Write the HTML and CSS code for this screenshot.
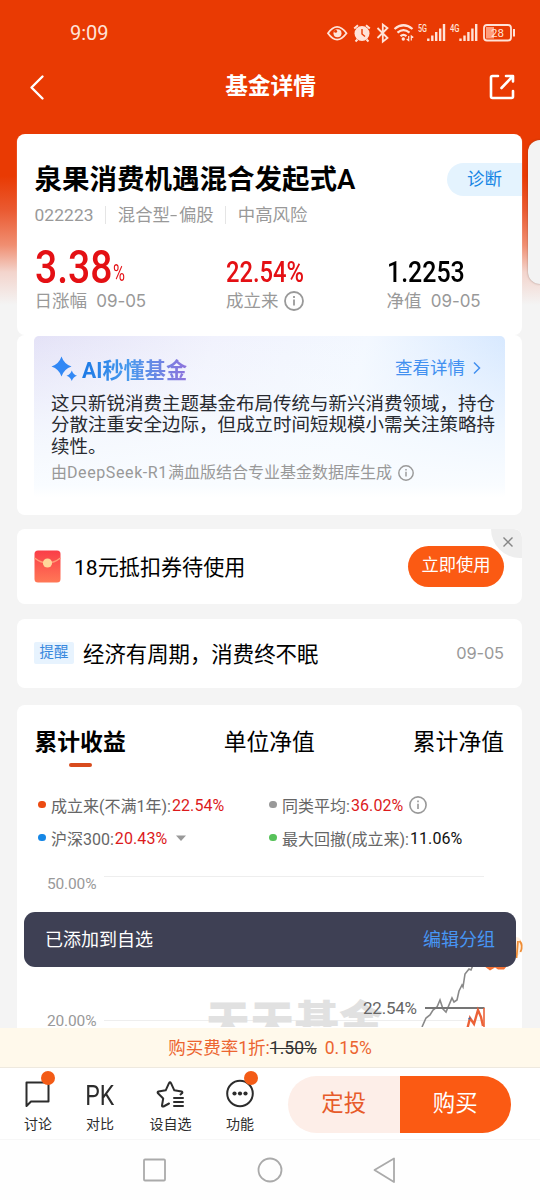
FILE: index.html
```html
<!DOCTYPE html>
<html lang="zh-CN">
<head>
<meta charset="utf-8">
<title>基金详情</title>
<link rel="stylesheet" href="styles.css">
</head>
<body>
<div class="phone">
  <header class="status">
    <span class="clock">9:09</span>
    <svg class="status-icons" width="192" height="26" viewBox="326 20 192 26" fill="none" stroke="#ffe3d8" stroke-width="1.8">
      <path d="M328 33.200Q337 20.500 346.500 33.200Q337 46 328 33.200Z"/>
      <circle cx="337.500" cy="33.200" r="4" fill="#ffe3d8" stroke="none"/><circle cx="335.600" cy="31.300" r="1.500" fill="#e93a03" stroke="none"/>
      <circle cx="362" cy="33.500" r="7.500" fill="#ffe3d8" stroke="none"/>
      <path d="M354.200 28.500l3.800-3.300M369.800 28.500l-3.800-3.300M357.500 39.500l-2 2M366.500 39.500l2 2" stroke-width="2"/>
      <path d="M362 29v5l3 2.500" stroke="#e93a03" stroke-width="1.400"/>
      <path d="M377.500 28l10 10-4.700 3.700V24.500l4.700 3.500-10 10"/>
      <path d="M394.500 29q9-7.500 18 0M397.500 32.700q6-5 12 0M400.500 36.200q3-2.500 6 0" stroke-width="2.200"/>
      <circle cx="403.300" cy="39" r="1.700" fill="#ffe3d8" stroke="none"/>
      <path d="M408.700 36v4.500l-2-1.500M411.300 40.500v-4.500l2 1.500" stroke-width="1.200"/>
      <path d="M428.300 41v-2.500M432.300 41v-5.500M436.200 41v-9M440.200 41v-12.500M444 41v-17" stroke-width="2.400"/>
      <path d="M460.500 41v-2.500M464.500 41v-5.500M468.400 41v-9M472.400 41v-12.500M476.200 41v-17" stroke-width="2.400"/>
      <rect x="484" y="25" width="27" height="15.500" rx="3"/>
      <rect x="486" y="27" width="8" height="11.500" fill="#ff9d7b" stroke="none"/>
      <path d="M514 29v7.500" stroke-width="2"/>
      <g class="status-text" fill="#ffe3d8" stroke="none">
        <text x="418" y="32" font-size="10" textLength="9" lengthAdjust="spacingAndGlyphs">5G</text>
        <text x="450" y="32" font-size="10" textLength="9.500" lengthAdjust="spacingAndGlyphs">4G</text>
        <text class="level" x="491" y="37" font-size="11.500">28</text>
      </g>
    </svg>
  </header>
  <nav class="navbar">
    <svg width="20" height="28" viewBox="0 0 20 28" fill="none" stroke="#fff" stroke-width="2.400" stroke-linecap="round" stroke-linejoin="round"><path d="M14.500 3.500L3.500 14.500 14.500 25.500"/></svg>
    <h1>基金详情</h1>
    <svg width="28" height="28" viewBox="0 0 28 28" fill="none" stroke="#fff" stroke-width="2.600" stroke-linecap="round" stroke-linejoin="round"><path d="M10 3H4.500Q3 3 3 4.500V23.500Q3 25 4.500 25H23.500Q25 25 25 23.500V18M13.500 15L24.500 3.500M18 3H25V8.500"/></svg>
  </nav>

  <main class="feed">
    <section class="card fund">
      <div class="fund-top">
        <h2>泉果消费机遇混合发起式A</h2>
        <span class="diagnose">诊断</span>
      </div>
      <div class="meta"><b>022223</b><i></i><span>混合型<u>-</u>偏股</span><i></i><span>中高风险</span></div>
      <div class="stats">
        <div class="stat"><div class="num big"><span>3.38</span><small>%</small></div><p>日涨幅 <time>09-05</time></p></div>
        <div class="stat"><div class="num"><span>22.54%</span></div><p>成立来<svg class="info" width="20" height="20" viewBox="0 0 20 20"><circle cx="10" cy="10" r="9"/><path d="M10 8.500v6"/><path d="M10 5v2"/></svg></p></div>
        <div class="stat"><div class="num black"><span>1.2253</span></div><p>净值 <time>09-05</time></p></div>
      </div>
    </section>
    <section class="card ai-card">
      <div class="ai">
        <div class="ai-head">
          <svg width="28" height="26" viewBox="0 0 28 26" fill="#3288f5"><path d="M10.500 1.500Q13 9 20.500 11.500 13 14 10.500 21.500 8 14 .5 11.500 8 9 10.500 1.500Z"/><path d="M20.800 15.500Q22 19.500 26 20.700 22 22 20.800 26 19.500 22 15.500 20.700 19.500 19.500 20.800 15.500Z"/></svg>
          <strong>AI秒懂基金</strong>
          <span class="more">查看详情</span>
          <svg width="10" height="14" viewBox="0 0 10 14" fill="none" stroke="#4290f0" stroke-width="1.500"><path d="M2 1.500L7.500 7 2 12.500"/></svg>
        </div>
        <p class="summary">这只新锐消费主题基金布局传统与新兴消费领域，持仓<br>分散注重安全边际，但成立时间短规模小需关注策略持<br>续性。</p>
        <p class="source"><span>由<span class="model">DeepSeek-R1</span>满血版结合专业基金数据库生成</span><svg class="info" width="16" height="16" viewBox="0 0 20 20"><circle cx="10" cy="10" r="9"/><path d="M10 8.500v6"/><path d="M10 5v2"/></svg></p>
      </div>
    </section>

    <section class="card coupon">
      <svg width="27" height="33" viewBox="0 0 27 33"><defs><linearGradient id="env" x2="0" y2="1"><stop stop-color="#fa3d48"/><stop offset="1" stop-color="#ff7856"/></linearGradient></defs><rect x=".5" y=".5" width="26" height="32" rx="3.500" fill="url(#env)"/><path d="M.5 8Q13.500 18 26.500 8" fill="none" stroke="#ff9d78" stroke-width="1.500"/><circle cx="13.500" cy="13" r="4.600" fill="#ffd69a"/></svg>
      <span class="coupon-text">18元抵扣券待使用</span>
      <button class="use">立即使用</button>
      <span class="close"><svg width="12" height="12" viewBox="0 0 12 12" stroke="#858585" stroke-width="1.400"><path d="M1.500 1.500l9 9M10.500 1.500l-9 9"/></svg></span>
    </section>

    <section class="card notice"><span class="tag">提醒</span><span class="notice-text">经济有周期，消费终不眠</span><time>09-05</time></section>

    <section class="card perf">
      <div class="tabs"><b>累计收益</b><span>单位净值</span><span>累计净值</span></div>
      <div class="legend">
        <div class="key orange">成立来(不满1年):<em>22.54%</em></div>
        <div class="key gray">同类平均:<em>36.02%</em><svg class="info" width="18" height="18" viewBox="0 0 20 20"><circle cx="10" cy="10" r="9"/><path d="M10 8.500v6"/><path d="M10 5v2"/></svg></div>
        <div class="key blue">沪深300:<em>20.43%</em><svg class="caret" width="10" height="6" viewBox="0 0 10 6"><path d="M0 .5h10L5 6z" fill="#999"/></svg></div>
        <div class="key green">最大回撤(成立来):<em class="dark">11.06%</em></div>
      </div>
      <svg class="chart" width="523" height="162" viewBox="17 865 523 162" fill="none">
        <path d="M104 876.500H484M104 1020.500H484" stroke="#eee"/>
        <text class="watermark" x="206" y="1038" textLength="177">天天基金</text>
        <text class="axis" x="47" y="888.500" textLength="49.500">50.00%</text>
        <text class="axis" x="47" y="1026" textLength="49.500">20.00%</text>
        <path d="M422 1027l4-9 4-3 3-5 4-3 3-7 3 9 3 3 6-14 2 4 3-2 2-9 3-6 1 2 2-13 4-5 2 1 2-5 6-16" stroke="#898989" stroke-width="1.600"/>
        <path d="M425 1008H484.500" stroke="#757575" stroke-width="2"/>
        <text class="axis current" x="363" y="1014" textLength="54">22.54%</text>
        <path d="M484 1008V1028" stroke="#ec6237" stroke-width="1.600"/>
        <path d="M467.500 1028l2.500-10 4 6 4-14 3 7 2 9" stroke="#ec6237" stroke-width="2.400"/>
        <path d="M468.500 1019l2-1" stroke="#426ca8" stroke-width="1.500"/>
        <path d="M484 966l3-4h15l5 4-3 3.500h-6l-3-2-5 3z" fill="#f47235"/>
        <path d="M514 937q8-1 8 8t-6 12l-4-5z" fill="#fff0df"/><path d="M516.500 958l1.500-17M520.500 952q3-7-1-11" stroke="#ef8d36" stroke-width="1.800"/>
      </svg>
    </section>
  </main>

  <aside class="fee"><span>购买费率1折:</span><s>1.50%</s><span>0.15%</span></aside>

  <footer class="actions">
    <a class="act"><svg width="30" height="30" viewBox="0 0 30 30"><path d="M3.500 4.500H25.500V23.500H8L3.500 28Z"/></svg><label>讨论</label><i class="dot"></i></a>
    <a class="act"><span class="pk">PK</span><label>对比</label></a>
    <a class="act"><svg width="30" height="30" viewBox="0 0 30 30"><path d="M13 25.500L7.500 28.500Q5.800 29 6 27.500L7.200 20.500 2 15.300Q1 14 2.500 13.500L9.700 12.300 13 5.200Q14 3.500 15 5.200L18.300 12.300 25.500 13.500Q27 14 26 15.300L24.500 16.500M18 20H27M18 24H27M18 28H27"/></svg><label>设自选</label></a>
    <a class="act"><svg width="30" height="30" viewBox="0 0 30 30"><circle cx="15" cy="15.500" r="12.800"/><g fill="#2c2c2c" stroke="none"><circle cx="9.500" cy="15.500" r="2.100"/><circle cx="15" cy="15.500" r="2.100"/><circle cx="20.500" cy="15.500" r="2.100"/></g></svg><label>功能</label><i class="dot"></i></a>
    <div class="trade"><button class="plan">定投</button><button class="buy">购买</button></div>
  </footer>

  <div class="sysnav">
    <svg width="256" height="30" viewBox="142 1155 256 30" fill="none" stroke="#aaa" stroke-width="1.800" stroke-linejoin="round"><rect x="144" y="1159.500" width="21" height="21" rx="1"/><circle cx="270" cy="1170" r="11.500"/><path d="M374.500 1170L394 1158.500V1182Z"/></svg>
  </div>

  <div class="side-tab"></div>
  <div class="toast"><span>已添加到自选</span><a>编辑分组</a></div>
</div>
</body>
</html>
```
FILE: styles.css
```css
* { box-sizing: border-box; margin: 0; padding: 0; }
body { background: #f4f4f4; }
.phone {
  position: relative; width: 540px; height: 1200px; overflow: hidden;
  display: flex; flex-direction: column;
  font-family: Roboto, "Noto Sans CJK SC", sans-serif; white-space: nowrap; color: #111;
  background: linear-gradient(#e93a03 0, #e93a03 176px, #ea5a31 210px, #f08e71 245px, #f3d4cc 272px, #f4f4f4 305px);
}
button { border: 0; font-family: inherit; }
i, em { font-style: normal; }
svg { flex: none; }
time { font-family: Inter, Roboto, sans-serif; font-size: 16.4px; letter-spacing: -.1px; }

.status { height: 66px; padding: 20px 22px 0 70px; display: flex; justify-content: space-between; }
.clock { font-size: 20px; line-height: 27px; color: #ffe3d8; }
.status-text { font-family: Roboto, sans-serif; font-weight: 500; }
.level { font-weight: 400; }
.navbar { height: 68px; padding: 0 24px 27px 28px; display: flex; justify-content: space-between; align-items: center; color: #fff; }
.navbar h1 { font-size: 22.7px; line-height: 32px; font-weight: 700; margin-left: 5px; }

.feed { flex: 1; min-height: 0; overflow: hidden; padding: 0 0 0 17px; }
.card { width: 505px; background: #fff; border-radius: 8px; }
.fund { height: 201px; padding: 26px 0 0 17.5px; box-shadow: 0 1px 1px #f5f5f5; }
.fund-top { display: flex; justify-content: space-between; height: 41px; }
.fund h2 { font-size: 27.5px; line-height: 40px; font-weight: 600; color: #000; }
.diagnose { width: 75px; height: 33px; margin-top: 3px; padding-left: 20px; border-radius: 17px 0 0 17px; background: #e4f3fe; color: #1685e4; font-size: 17.5px; line-height: 33px; }
.meta { display: flex; align-items: center; height: 28px; font-size: 17.4px; line-height: 28px; color: #999; }
.meta b { font-weight: 400; letter-spacing: .1px; }
.meta u { display: inline-block; width: 9px; text-decoration: none; transform: scaleX(1.5); transform-origin: left; }
.meta i { width: 1px; height: 18px; background: #e5e5e5; margin: 0 12px 0 11px; }
.stats { display: grid; grid-template-columns: 191.5px 160.5px 130px; padding-top: 17px; }
.num { height: 42px; color: #e41014; font-size: 29.5px; line-height: 52px; font-weight: 500; display: flex; }
.num span { display: inline-block; transform: scaleX(.805); transform-origin: left; }
.num.black { color: #000; }
.num.black span { transform: scaleX(.845); }
.num.big { font-size: 46px; line-height: 43px; }
.num.big span { width: 78px; transform: scaleX(.85); }
.num small { font-size: 24px; line-height: 55px; font-weight: 400; transform: scaleX(.68); transform-origin: left; }
.stat p { display: flex; align-items: center; gap: 5px; font-size: 17.5px; line-height: 26px; color: #999; white-space: pre; }
.stat time { font-size: 17px; }
.info { fill: none; stroke: #999; stroke-width: 1.8; }

.ai-card { height: 180px; padding: 1px 17px; }
.ai { height: 162px; border-radius: 5px; padding: 17px 17px 0; background: linear-gradient(to bottom, rgba(247,251,255,0) 0, rgba(247,251,255,.8) 60%, #f9fcff 92%, #fff), linear-gradient(105deg, #e4e2f7, #f1f2fd 35%, #f3f8ff 65%, #cfe4ff); }
.ai-head { display: flex; align-items: center; height: 30px; }
.ai-head strong { margin-left: 3px; font-size: 21.2px; font-weight: 700; background: linear-gradient(90deg, #1b79e6, #499aed 45%, #8e73dc); -webkit-background-clip: text; background-clip: text; color: transparent; }
.more { margin: -3px 7px 0 auto; font-size: 17.5px; color: #4290f0; }
.ai-head svg:last-child { margin-right: 6px; }
.summary { margin-top: 11px; font-size: 18.5px; line-height: 21.4px; color: #282a30; }
.source { display: flex; align-items: center; gap: 6px; margin-top: 3px; font-size: 16px; line-height: 24px; color: #999; }
.model { letter-spacing: .6px; }

.coupon { position: relative; height: 75px; margin-top: 14px; padding: 0 18px 0 17px; display: flex; align-items: center; overflow: hidden; }
.coupon-text { margin: -2px 0 0 13px; font-size: 21.1px; color: #000; }
.use { width: 96px; height: 41px; margin-left: auto; border-radius: 21px; background: #fb5a13; color: #fff; font-size: 17.3px; line-height: 39px; padding-bottom: 2px; }
.close { position: absolute; top: 0; right: 0; width: 31px; height: 29px; border-radius: 0 8px 0 29px; background: #eee; display: flex; align-items: center; justify-content: center; padding: 0 0 4px 3px; }
.notice { height: 69px; margin-top: 15px; padding: 0 18px 0 17px; display: flex; align-items: center; }
.tag { width: 40px; height: 22px; margin-top: -1px; border-radius: 2px; background: #e7f3fe; color: #3888dd; font-size: 14.4px; line-height: 21px; text-align: center; }
.notice-text { margin: -3px 0 0 9px; font-size: 21.4px; color: #000; }
.notice time { margin: -1px 0 0 auto; color: #999; }

.perf { margin-top: 17px; height: 340px; padding-top: 21px; }
.tabs { display: flex; justify-content: space-between; height: 42px; padding: 0 18px 0 17.5px; font-size: 22.8px; line-height: 33px; color: #000; }
.tabs b { display: flex; flex-direction: column; align-items: center; }
.tabs b::after { content: ""; width: 23px; height: 4px; border-radius: 2px; background: #d84b1d; margin-top: 4px; }
.legend { display: grid; grid-template-columns: 231px 250px; grid-auto-rows: 33px; padding: 20px 0 0 21px; height: 97px; }
.key { display: flex; align-items: center; height: 33px; font-size: 16px; color: #666; }
.key::before { content: ""; width: 7.5px; height: 7.5px; border-radius: 4px; margin-right: 5.5px; background: #999; }
.orange::before { background: #ec4b12; }
.blue::before { background: #1687e6; }
.green::before { background: #57c25a; }
.key em { color: #dc1a1c; margin-left: 1px; padding-top: 2px; letter-spacing: .1px; }
.key em.dark { color: #111; }
.key .info { margin-left: 6px; }
.caret { margin-left: 9px; }
.chart { display: block; }
.axis { font-size: 15.5px; fill: #999; }
.current { font-size: 17px; fill: #666; }
.watermark { font-size: 44px; font-weight: 900; fill: #e1e1e1; }

.fee { height: 40px; display: flex; justify-content: center; align-items: center; background: #fff9eb; border-bottom: 1px solid #eee9df; font-size: 17.5px; color: #ec6530; }
.fee span:first-child { margin-top: -2px; }
.fee s { color: #333; margin-right: 8px; }
.actions { height: 71px; display: flex; background: #fff; padding: 8px 29px 0 3px; }
.act { position: relative; width: 70px; display: flex; flex-direction: column; align-items: center; }
.act:nth-child(2) { width: 54px; }
.act:nth-child(3) { width: 87px; }
.act:nth-child(4) { width: 52px; }
.act svg { fill: none; stroke: #2c2c2c; stroke-width: 2; stroke-linejoin: round; stroke-linecap: round; height: 32px; margin-top: 1px; }
.act label { font-size: 14px; line-height: 21px; margin-top: 5px; color: #2c2c2c; }
.pk { height: 33px; font-size: 28px; line-height: 39px; color: #2c2c2c; transform: scaleX(.82); }
.dot { position: absolute; left: 38px; top: -5px; width: 14px; height: 14px; border-radius: 50%; background: #f35b16; }
.act:nth-child(4) .dot { left: 29.5px; }
.trade { display: flex; width: 223px; height: 57px; margin-left: auto; }
.trade button { flex: 1; font-size: 22.4px; line-height: 52px; padding-bottom: 3px; border-radius: 29px 0 0 29px; background: #fdeee8; color: #e75b2a; }
.trade .buy { border-radius: 0 29px 29px 0; background: #fb5a13; color: #fff; }
.sysnav { height: 61px; background: #fefefe; border-top: 1px solid #f7f7f7; display: flex; justify-content: center; padding-top: 15px; }

.side-tab { position: absolute; left: 528px; top: 140px; width: 24px; height: 144px; border-radius: 14px; background: #f3f3f3; box-shadow: 0 0 2px rgba(90,60,50,.5); }
.toast { position: absolute; left: 24px; top: 912px; width: 492px; height: 55px; padding: 0 21px 3px; border-radius: 11px; background: #3e4054; display: flex; align-items: center; justify-content: space-between; font-size: 18px; color: #fff; }
.toast a { color: #4796f5; }
```
